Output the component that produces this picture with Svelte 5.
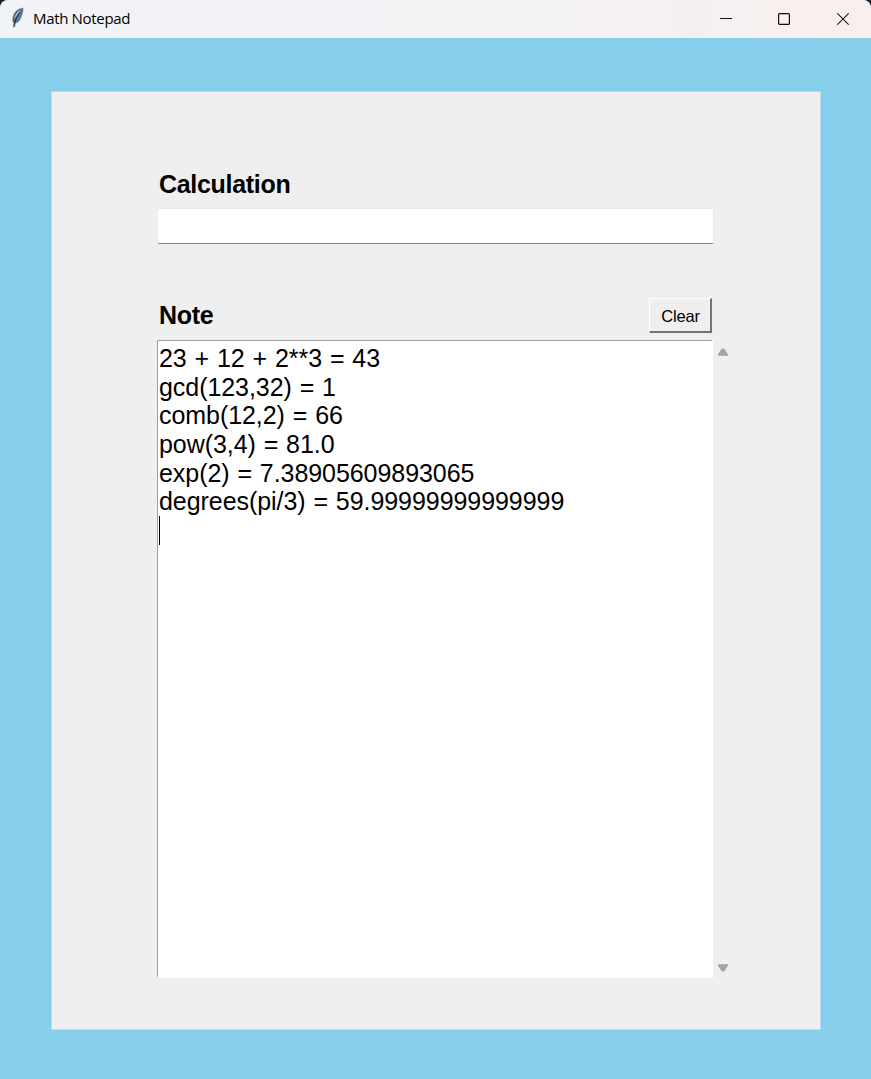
<script>
  let calculation = $state('');
  let lines = $state([
    '23 + 12 + 2**3 = 43',
    'gcd(123,32) = 1',
    'comb(12,2) = 66',
    'pow(3,4) = 81.0',
    'exp(2) = 7.38905609893065',
    'degrees(pi/3) = 59.99999999999999'
  ]);
</script>

<div class="window">
  <header class="titlebar">
    <svg class="feather" width="14" height="22" viewBox="0 0 14 22">
      <path d="M13 1C9 1 4 4.500 2.900 10.200c-.5 2.400-.2 4.300.6 5.600l-.2 4.300 1.400-.1.6-3.700c3-.8 5-3.400 5.900-6.300l1-2.400C13 5.500 13.200 3 13 1z" fill="#49525b" stroke="#a8acb0" stroke-width=".8" />
      <path d="M11.900 2.200C8 3.600 4.200 7.500 4 13.500c1.200-3.700 4.700-7.500 7.900-11.300z" fill="#a5c6e6" />
      <path d="M12.200 2.900c-3.400 3.800-5.900 8.100-7 12.700 3.200-.9 4.600-3.700 5.400-6.500 1.100-1.700 1.600-4.200 1.600-6.200z" fill="#4186d2" />
      <path d="M10.300 5C7.600 8.500 5.200 12.600 4 19.700" fill="none" stroke="#202a35" stroke-width=".9" />
    </svg>
    <span class="title">Math Notepad</span>
    <div class="controls">
      <svg width="12" height="14" viewBox="0 0 12 14"><path d="M0 6.500h12" stroke="#111" /></svg>
      <svg width="12" height="14" viewBox="0 0 12 14"><rect x=".6" y="1.600" width="10.800" height="10.800" rx="1" fill="none" stroke="#111" stroke-width="1.200" /></svg>
      <svg width="12" height="14" viewBox="0 0 12 14"><path d="M.3 1.300l11.400 11.400M11.700 1.300L.3 12.700" stroke="#111" stroke-width="1.150" /></svg>
    </div>
  </header>

  <main class="panel">
    <label class="heading" for="calculation">Calculation</label>
    <input id="calculation" class="entry" bind:value={calculation} />

    <div class="note-head">
      <h2 class="heading">Note</h2>
      <button class="clear" onclick={() => (lines = [])}>Clear</button>
    </div>

    <div class="note">
      <div class="text">
        {#each lines as line}
          <div class="line">{line}</div>
        {/each}
        <div class="caret"></div>
      </div>
      <div class="scroll">
        <svg width="12" height="8" viewBox="0 0 12 8"><path d="M1.600 6.900 5.400 1.200h1.200l3.800 5.700z" fill="#a3a3a3" stroke="#a3a3a3" stroke-width="1.600" stroke-linejoin="round" /></svg>
        <svg width="12" height="8" viewBox="0 0 12 8"><path d="M1.600 1.100 5.400 6.800h1.200l3.800-5.700z" fill="#a3a3a3" stroke="#a3a3a3" stroke-width="1.600" stroke-linejoin="round" /></svg>
      </div>
    </div>
  </main>
</div>

<style>
  :global(body) {
    margin: 0;
    background: #202127;
  }
  .window {
    box-sizing: border-box;
    width: 871px;
    height: 1079px;
    overflow: hidden;
    border-radius: 8px 8px 0 0;
    background: #87ceeb;
    font-family: "Liberation Sans", Arial, sans-serif;
    color: #000;
  }
  .titlebar {
    display: flex;
    align-items: center;
    box-sizing: border-box;
    height: 38px;
    padding: 0 22px 0 10px;
    background: linear-gradient(90deg, #f1f3f7 0%, #f2f2f5 45%, #f5f0f0 80%, #f9efed 100%);
  }
  .feather {
    margin-top: -3px;
  }
  .title {
    margin: -2px 0 0 9px;
    font: 15px/20px "Open Sans", "Noto Sans", sans-serif;
    letter-spacing: -0.33px;
    white-space: nowrap;
  }
  .controls {
    display: flex;
    gap: 47px;
    margin-left: auto;
  }
  .controls svg {
    display: block;
  }
  .controls svg:nth-child(2) {
    margin-left: -1px;
  }
  .panel {
    box-sizing: border-box;
    width: 770px;
    height: 939px;
    margin: 53px 0 0 51px;
    padding: 77px 0 0 105px;
    border: 1px solid #bbdeed;
    background: #efefef;
  }
  .heading {
    display: block;
    margin: 0;
    padding-left: 2px;
    font-size: 25px;
    font-weight: 700;
    line-height: 30px;
    letter-spacing: -0.3px;
  }
  .entry {
    display: block;
    box-sizing: border-box;
    width: 557px;
    height: 36px;
    margin: 9px 0 0;
    padding: 2px 4px;
    border: 1px solid #e9e9e9;
    border-bottom-color: #858585;
    border-radius: 2px;
    outline: none;
    background: #fff;
    font: 25px "Liberation Sans", Arial, sans-serif;
  }
  .note-head {
    display: flex;
    align-items: center;
    justify-content: space-between;
    width: 555px;
    height: 35px;
    margin-top: 54px;
  }
  .note-head .heading {
    margin-top: -1px;
  }
  .clear {
    box-sizing: border-box;
    width: 63px;
    height: 35px;
    padding: 2px 0 0 1px;
    border: 2px solid;
    border-color: #fff #737373 #737373 #fff;
    border-width: 1px 2px 2px 1px;
    border-radius: 0;
    background: #efefef;
    font: 16.500px "Liberation Sans", Arial, sans-serif;
    letter-spacing: -0.2px;
    color: #000;
  }
  .note {
    display: flex;
    margin-top: 7px;
  }
  .text {
    box-sizing: border-box;
    width: 556px;
    height: 638px;
    padding: 3px 0 0 1px;
    border: solid;
    border-width: 1px 2px 2px 1px;
    border-color: #a0a0a0 #fff #fff #a0a0a0;
    background: #fff;
    font-size: 25px;
    line-height: 28.700px;
    letter-spacing: -0.06px;
    word-spacing: 1px;
  }
  .line {
    height: 28.700px;
    white-space: pre;
  }
  .caret {
    width: 1px;
    height: 29px;
    background: #000;
  }
  .scroll {
    display: flex;
    flex-direction: column;
    justify-content: space-between;
    box-sizing: border-box;
    height: 638px;
    padding: 8px 0 6px 4px;
  }
</style>
